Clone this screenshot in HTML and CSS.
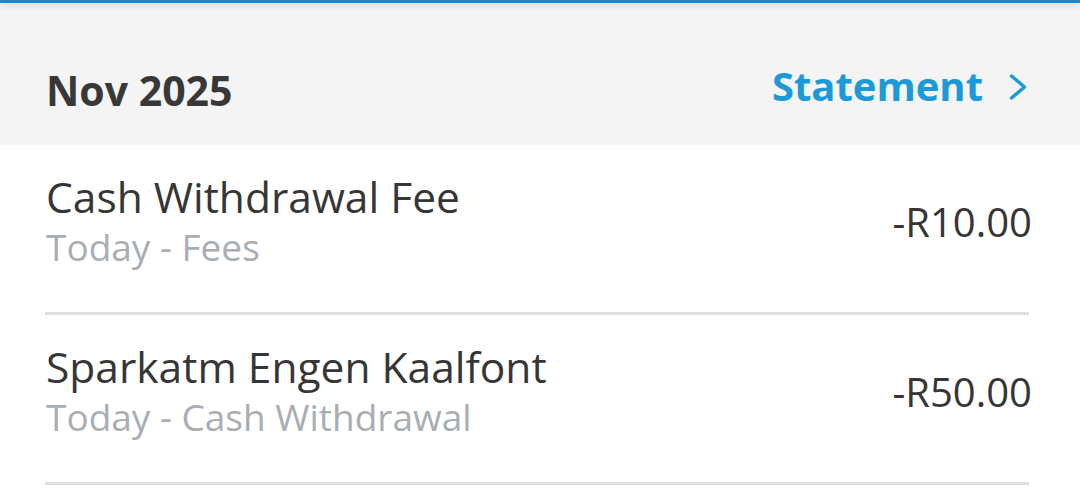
FILE: index.html
```html
<!DOCTYPE html>
<html lang="en">
<head>
    <meta charset="UTF-8">
    <meta name="viewport" content="width=device-width, initial-scale=1.0">
    <title>Transactions</title>
    <link rel="stylesheet" href="styles.css">
</head>
<body>
    <div class="topbar"></div>
    <header class="month-header">
        <h2 class="month">Nov 2025</h2>
        <a class="statement" href="#">
            Statement
            <svg class="chevron" width="20" height="28" viewBox="0 0 20 28">
                <path d="M3.5 3 L16.5 14 L3.5 25" fill="none" stroke="currentColor" stroke-width="3.4" stroke-linecap="round" stroke-linejoin="round"/>
            </svg>
        </a>
    </header>
    <ul class="transactions">
        <li class="tx">
            <div class="tx-info">
                <div class="tx-title">Cash Withdrawal Fee</div>
                <div class="tx-sub">Today - Fees</div>
            </div>
            <div class="tx-amount">-R10.00</div>
        </li>
        <li class="tx">
            <div class="tx-info">
                <div class="tx-title">Sparkatm Engen Kaalfont</div>
                <div class="tx-sub">Today - Cash Withdrawal</div>
            </div>
            <div class="tx-amount">-R50.00</div>
        </li>
    </ul>
</body>
</html>
```

FILE: styles.css
```css
body {
    margin: 0;
    background-color: #ffffff;
    font-family: "Open Sans", "Liberation Sans", sans-serif;
    color: #363636;
    overflow: hidden;
}

.topbar {
    height: 3px;
    background-color: #1a88d0;
    box-shadow: 0 2px 6px rgba(0, 0, 0, 0.18);
    position: relative;
    z-index: 2;
}

/* En-tete du mois */
.month-header {
    display: flex;
    align-items: center;
    justify-content: space-between;
    height: 142px;
    padding: 22px 52px 0 46px;
    background-color: #f4f4f4;
    box-sizing: border-box;
}

.month {
    margin: 10px 0 0 0;
    font-size: 41px;
    font-weight: 700;
    color: #383838;
}

.statement {
    display: flex;
    align-items: center;
    gap: 25px;
    font-size: 40px;
    font-weight: 700;
    color: #1b9ad8;
    text-decoration: none;
}

.chevron {
    display: block;
    margin-top: 4px;
}

/* Liste des transactions */
.transactions {
    list-style: none;
    margin: 0;
    padding: 0 51px 0 45px;
}

.tx {
    display: flex;
    align-items: center;
    justify-content: space-between;
    height: 170px;
    border-bottom: 3px solid #e0e0e0;
    box-sizing: border-box;
}

.tx-info {
    padding-left: 1px;
    margin-bottom: 16px;
}

.tx-title {
    font-size: 42.5px;
    line-height: 52px;
    color: #363636;
}

.tx-sub {
    font-size: 37px;
    line-height: 48px;
    color: #a9aeb2;
}

.tx-amount {
    font-size: 40px;
    line-height: 1;
    margin-right: -3px;
    margin-bottom: 14px;
    color: #363636;
}
```
